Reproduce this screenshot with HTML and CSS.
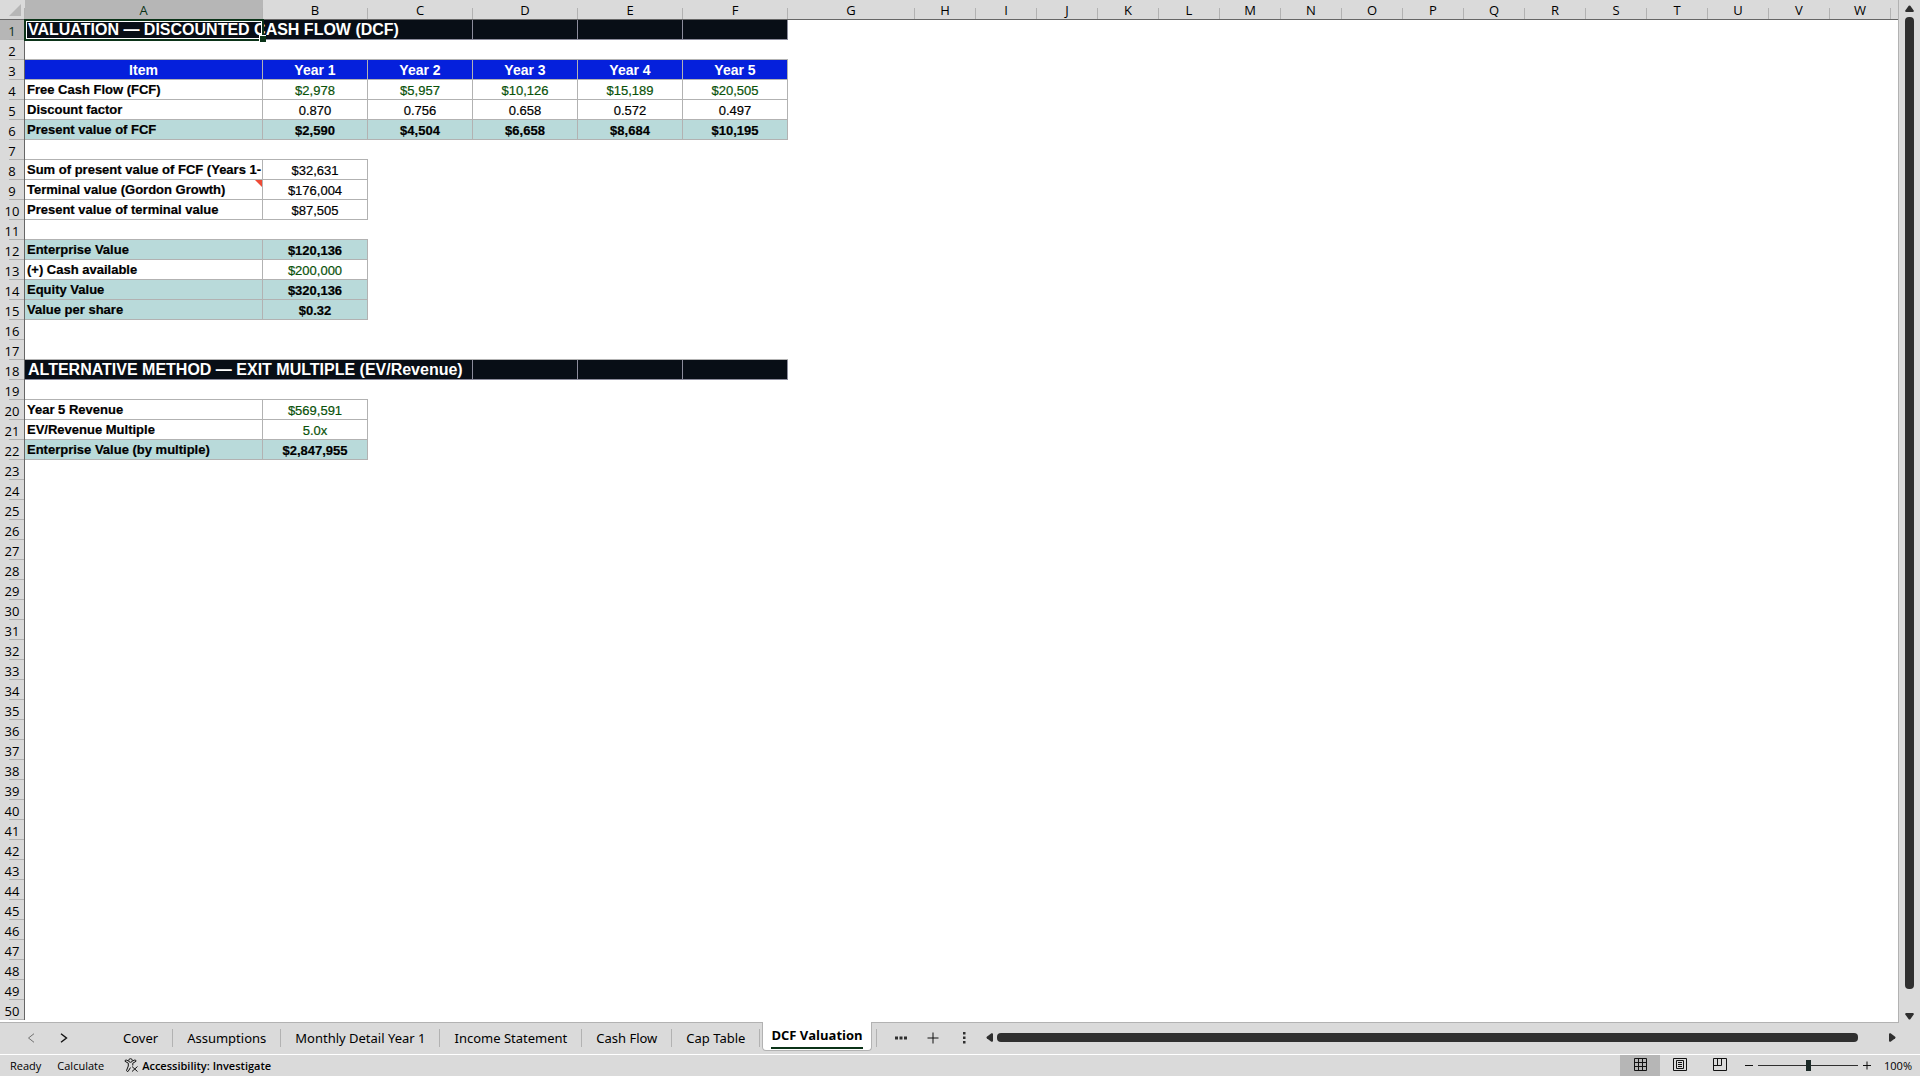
FILE: index.html
```html
<!DOCTYPE html>
<html lang="en">
<head>
<meta charset="utf-8">
<title>DCF Valuation</title>
<link rel="stylesheet" href="styles.css">
</head>
<body>
<div class="app">
  <main class="workspace">
    <div class="sheet">
      <table class="grid">
        <colgroup><col class="c-num"><col class="c-a"><col class="c-v"><col class="c-v"><col class="c-v"><col class="c-v"><col class="c-v"><col class="c-g"></colgroup>
        <thead><tr id="letters"></tr></thead>
        <tbody id="rows"></tbody>
      </table>
    </div>
    <div class="vscroll">
      <button class="arrow" aria-label="Scroll up"><svg width="9" height="7" viewBox="0 0 9 7"><path d="M3.7.8Q4.5 0 5.3.8L8.7 5.4Q9 7 8 7H1Q0 7 .3 5.4Z"/></svg></button>
      <div class="thumb"></div>
      <button class="arrow down" aria-label="Scroll down"><svg width="9" height="7" viewBox="0 0 9 7"><path d="M3.7 6.2Q4.5 7 5.3 6.2L8.7 1.6Q9 0 8 0H1Q0 0 .3 1.6Z"/></svg></button>
    </div>
  </main>
  <nav class="tabs">
    <div class="steps">
      <button aria-label="Previous sheet" class="dim"><svg width="8" height="10" viewBox="0 0 8 10"><path d="M7 .7 1.5 5 7 9.3"/></svg></button>
      <button aria-label="Next sheet"><svg width="8" height="10" viewBox="0 0 8 10"><path stroke-width="1.4" d="M1 .7 6.5 5 1 9.3"/></svg></button>
    </div>
    <button class="tab">Cover</button>
    <button class="tab">Assumptions</button>
    <button class="tab">Monthly Detail Year 1</button>
    <button class="tab">Income Statement</button>
    <button class="tab">Cash Flow</button>
    <button class="tab">Cap Table</button>
    <button class="tab active"><span>DCF Valuation</span></button>
    <div class="tools">
      <button aria-label="All sheets"><svg width="12" height="4" viewBox="0 0 12 4"><path class="fill" d="M0 .5h3v3H0zM4.500 .5h3v3h-3zM9 .5h3v3H9z"/></svg></button>
      <button aria-label="New sheet"><svg width="12" height="12" viewBox="0 0 12 12"><path d="M6 .5v11M.5 6h11"/></svg></button>
      <button aria-label="Resize tabs"><svg width="3" height="13" viewBox="0 0 3 13"><path class="fill" d="M0 1h2.500v2.500H0zM0 5.500h2.500v2.500H0zM0 10h2.500v2.500H0z"/></svg></button>
    </div>
    <div class="hscroll">
      <button class="arrow" aria-label="Scroll left"><svg width="7" height="9" viewBox="0 0 7 9"><path d="M.8 3.700Q0 4.500 .8 5.300L5.400 8.700Q7 9 7 8V1Q7 0 5.400 .3Z"/></svg></button>
      <div class="thumb"></div>
      <button class="arrow" aria-label="Scroll right"><svg width="7" height="9" viewBox="0 0 7 9"><path d="M6.200 3.700Q7 4.500 6.200 5.300L1.600 8.700Q0 9 0 8V1Q0 0 1.600 .3Z"/></svg></button>
    </div>
  </nav>
  <footer class="status">
    <span class="mode">Ready</span>
    <span class="mode">Calculate</span>
    <button class="access"><svg width="15" height="15" viewBox="0 0 15 15"><circle cx="6.500" cy="2.500" r="1.800"/><path d="M4.500 3 2.200 2Q.8 2 1 3.300L4.300 5.200V8L2.500 12.500Q3 14 4.200 13.300L6.500 9.500M8.500 3l2.300-1Q12.300 2 12 3.300L8.800 5.200V7.500M8 8.500l5.500 5M13.500 8.500 8 13.500"/></svg>Accessibility: Investigate</button>
    <div class="views">
      <button class="on" aria-label="Normal view"><svg width="13" height="13" viewBox="0 0 13 13"><path d="M.5.5h12v12H.5zM4.500 .5v12M8.500 .5v12M.5 4.500h12M.5 8.500h12"/></svg></button>
      <button aria-label="Page layout view"><svg width="14" height="13" viewBox="0 0 14 13"><path d="M.5.5h13v12H.5zM3.500 2.500h7v8h-7zM5 4.500h4M5 6.500h4M5 8.500h4"/></svg></button>
      <button aria-label="Page break view"><svg width="14" height="13" viewBox="0 0 14 13"><path d="M.5.5h13v12H.5zM4.500 .5v7M8.500 .5v7M.5 7.500h8"/></svg></button>
    </div>
    <div class="zoom">
      <button aria-label="Zoom out"><svg width="8" height="9" viewBox="0 0 8 9"><path d="M0 4.500h8"/></svg></button>
      <input type="range" aria-label="Zoom" min="0" max="100" value="50">
      <button aria-label="Zoom in"><svg width="8" height="9" viewBox="0 0 8 9"><path d="M0 4.500h8M4 .5v8"/></svg></button>
      <button class="pct">100%</button>
    </div>
  </footer>
</div>
<script src="sheet.js"></script>
</body>
</html>
```
FILE: styles.css
```css
* { box-sizing: border-box; }
body { margin: 0; font-family: "Open Sans", "Noto Sans", sans-serif; font-size: 13px; color: #000; background: #dadada; }
button { border: 0; padding: 0; margin: 0; background: none; font: inherit; color: inherit; }
svg { display: block; fill: none; stroke: #111; }
.fill, .arrow svg { fill: #2f2f2f; stroke: none; }
.app { height: 100vh; display: flex; flex-direction: column; }
.workspace { flex: 1; min-height: 0; display: flex; }
.sheet { flex: 1; min-width: 0; overflow: hidden; background: #fff; border-right: 1px solid #b2b2b2; border-bottom: 1px solid #b2b2b2; }

.grid { table-layout: fixed; width: 100%; border-collapse: separate; border-spacing: 0; }
.c-num { width: 25px; }
.c-a { width: 238px; }
.c-v { width: 105px; }
.c-g { width: 127px; }
.c-s { width: 61px; }
th, td { height: 20px; padding: 2px 0 0; line-height: 17px; white-space: nowrap; overflow: hidden; }
thead th { font-weight: 400; background: linear-gradient(#b2b2b2, #b2b2b2) right bottom / 1px 11px no-repeat #dadada; border-bottom: 1px solid #666; padding-right: 1px; }
thead th.sel { background-color: #b6b6b6; color: #0b3318; }
thead th.corner { padding: 0; }
thead th.last { background: #dadada; }
.corner svg { margin-left: 9px; fill: #b6b6b6; stroke: none; }
tbody th { font-weight: 400; background: linear-gradient(#b2b2b2, #b2b2b2) right bottom / 15px 1px no-repeat #dadada; border-right: 1px solid #666; }
tbody th.sel { background-color: #b6b6b6; color: #0b3318; }
td { font-family: "Liberation Sans", Arial, sans-serif; text-align: center; color: #000; }
.cell { border-right: 1px solid #b2b2b2; border-bottom: 1px solid #b2b2b2; -webkit-text-stroke: 0.2px; }
.top { border-bottom: 1px solid #b2b2b2; }
.label { text-align: left; padding: 0 0 0 2px; line-height: 19px; font-weight: 700; position: relative; }
.green { color: #0a520a; }
.total { background: #b9dada; font-weight: 700; }
.head { background: #0520dc; color: #fff; font-weight: 700; font-size: 14px; -webkit-text-stroke: 0; }
.dark { background: #080e16; border-color: #8c8c9c; }
.title { color: #fff; font-size: 16px; font-weight: 700; text-align: left; padding: 0 0 0 3px; line-height: 19px; position: relative; -webkit-text-stroke: 0; }
.title.first { overflow: visible; }
.cursor { position: absolute; left: -1px; top: -1px; width: 240px; height: 22px; border: 2px solid #0b3318; box-shadow: inset 0 0 0 1px #fff; }
.cursor::after { content: ""; position: absolute; right: -4px; bottom: -3px; width: 6px; height: 6px; background: #0b3318; border-left: 1px solid #fff; border-top: 1px solid #fff; }
.note::after { content: ""; position: absolute; right: 0; top: 0; border-top: 7px solid #ee4b36; border-left: 7px solid transparent; }

.vscroll { width: 21px; display: flex; flex-direction: column; align-items: center; padding: 5px 0 3px; }
.thumb { background: #2f2f2f; border-radius: 4px; flex: 1; }
.vscroll .thumb { width: 9px; margin: 5px 0 24px; }

.tabs { height: 31px; display: flex; align-items: center; padding-bottom: 2px; }
.steps { display: flex; gap: 25px; padding-left: 27px; width: 109px; }
.dim svg { stroke: #707070; }
.tab { height: 18px; line-height: 18px; padding: 0 14px; border-right: 1px solid #b2b2b2; white-space: nowrap; font-family: "Noto Sans", "Open Sans", sans-serif; }
.tab.active { height: 29px; align-self: flex-start; margin: -1px 4px 0 2px; padding: 0 8px; background: #fff; border: 1px solid #b2b2b2; border-top: 0; border-radius: 0 0 4px 4px; font-family: "Open Sans", "Noto Sans", sans-serif; font-weight: 700; }
.tab.active span { display: block; height: 25px; line-height: 23px; border-bottom: 2px solid #0b3318; }
.tools { display: flex; align-items: center; gap: 20px; border-left: 1px solid #b2b2b2; height: 18px; padding-left: 18px; }
.tools button:last-child { margin-left: 4px; }
.hscroll { flex: 1; display: flex; align-items: center; padding: 0 24px 0 20px; }
.hscroll .thumb { height: 9px; margin: 0 31px 0 4px; }

.status { height: 22px; display: flex; align-items: center; padding-left: 10px; border-top: 1px solid #fff; font-size: 11px; }
.mode { margin-right: 16px; }
.access { display: flex; align-items: center; gap: 3px; font-weight: 600; margin-left: 4px; }
.views { margin-left: auto; display: flex; align-self: stretch; }
.views button { width: 40px; display: grid; place-items: center; padding-bottom: 2px; }
.views .on { background: #b6b6b6; }
.zoom { display: flex; align-items: center; gap: 5px; padding: 0 8px 0 5px; }
.zoom input { appearance: none; width: 100px; height: 11px; margin: 0; background: linear-gradient(#2f2f2f, #2f2f2f) center / 100% 1px no-repeat; }
.zoom input::-webkit-slider-thumb { appearance: none; width: 5px; height: 11px; background: #1c2a28; }
.pct { margin-left: 8px; }
```
FILE: sheet.js
```js
const ROWS = 50;
const years = ["Year 1", "Year 2", "Year 3", "Year 4", "Year 5"];
const data = {
  3: { label: "Item", values: years, style: "head" },
  4: { label: "Free Cash Flow (FCF)", values: ["$2,978", "$5,957", "$10,126", "$15,189", "$20,505"], style: "green" },
  5: { label: "Discount factor", values: ["0.870", "0.756", "0.658", "0.572", "0.497"] },
  6: { label: "Present value of FCF", values: ["$2,590", "$4,504", "$6,658", "$8,684", "$10,195"], style: "total" },
  8: { label: "Sum of present value of FCF (Years 1-", values: ["$32,631"] },
  9: { label: "Terminal value (Gordon Growth)", values: ["$176,004"], note: true },
  10: { label: "Present value of terminal value", values: ["$87,505"] },
  12: { label: "Enterprise Value", values: ["$120,136"], style: "total" },
  13: { label: "(+) Cash available", values: ["$200,000"], style: "green" },
  14: { label: "Equity Value", values: ["$320,136"], style: "total" },
  15: { label: "Value per share", values: ["$0.32"], style: "total" },
  20: { label: "Year 5 Revenue", values: ["$569,591"], style: "green" },
  21: { label: "EV/Revenue Multiple", values: ["5.0x"], style: "green" },
  22: { label: "Enterprise Value (by multiple)", values: ["$2,847,955"], style: "total" }
};
const titles = {
  1: "VALUATION — DISCOUNTED CASH FLOW (DCF)",
  18: "ALTERNATIVE METHOD — EXIT MULTIPLE (EV/Revenue)"
};

const colgroup = document.querySelector("colgroup");
colgroup.insertAdjacentHTML("beforeend", '<col class="c-s">'.repeat(16) + "<col>");

document.getElementById("letters").innerHTML =
  '<th class="corner"><svg width="12" height="12" viewBox="0 0 12 12"><path d="M12 0v12H0z"/></svg></th>' +
  [..."ABCDEFGHIJKLMNOPQRSTUVW"].map((c, i) => `<th class="${i ? "" : "sel"}">${c}</th>`).join("") + '<th class="last"></th>';

function cells(n) {
  if (titles[n]) {
    const cursor = n === 1 ? '<span class="cursor"></span>' : "";
    return `<td colspan="3" class="cell dark title ${n === 1 ? "first" : ""}">${titles[n]}${cursor}</td>` +
      '<td class="cell dark"></td>'.repeat(3);
  }
  const row = data[n];
  if (row) {
    const style = row.style || "";
    const labelStyle = style === "head" ? "head" : `label ${style === "green" ? "" : style} ${row.note ? "note" : ""}`;
    return `<td class="cell ${labelStyle}">${row.label}</td>` +
      row.values.map(v => `<td class="cell ${style}">${v}</td>`).join("");
  }
  const below = titles[n + 1] ? 6 : data[n + 1] ? data[n + 1].values.length + 1 : 0;
  return '<td class="top"></td>'.repeat(below);
}

let html = "";
for (let n = 1; n <= ROWS; n++) {
  html += `<tr><th class="${n === 1 ? "sel" : ""}">${n}</th>${cells(n)}</tr>`;
}
document.getElementById("rows").innerHTML = html;
```
